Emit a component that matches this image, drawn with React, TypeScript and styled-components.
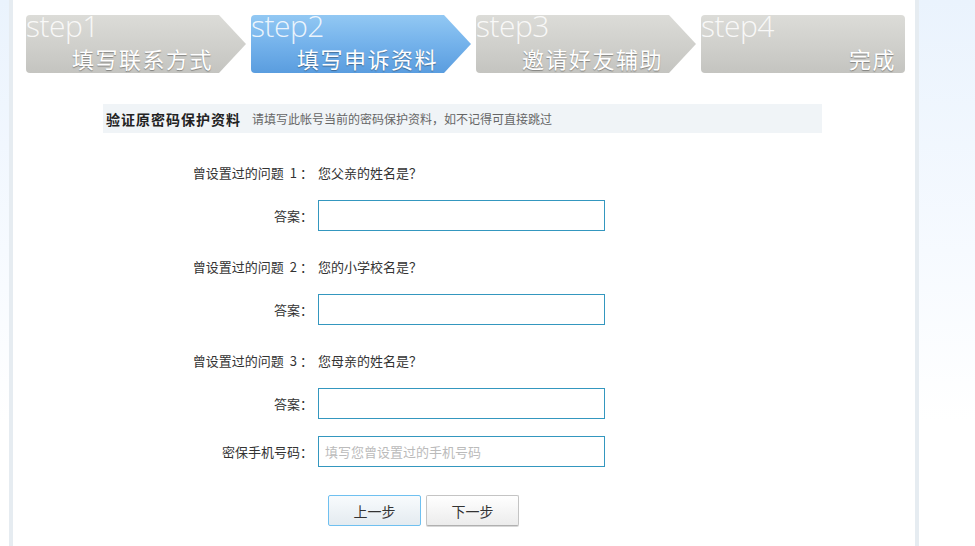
import React from 'react';
import styled, { createGlobalStyle } from 'styled-components';

const GlobalStyle = createGlobalStyle`
  html, body {
    margin: 0;
    padding: 0;
  }
  body {
    background: linear-gradient(to bottom, #eaf3fd 0, #f6faff 250px, #ffffff 420px);
    font-family: "Noto Sans CJK SC", "Liberation Sans", sans-serif;
    color: #333;
  }
`;

const Page = styled.div`
  display: flex;
  width: 975px;
  min-height: 546px;
  padding-left: 9px;
  box-sizing: border-box;
`;

const Panel = styled.div`
  width: 902px;
  background: #fff;
  border-left: 4px solid #e6ecf1;
  border-right: 4px solid #e6ecf1;
  padding-top: 15px;
  padding-bottom: 22px;
`;

const Steps = styled.div`
  display: flex;
  gap: 32px;
  margin-left: 13px;
`;

const grey = 'linear-gradient(to bottom, #dcdcd8 0%, #cfcfcb 55%, #c4c4c0 100%)';
const blue = 'linear-gradient(to bottom, #92c8f3 0%, #74b2eb 50%, #5a9ddf 100%)';

const Step = styled.div<{ $active?: boolean; $last?: boolean }>`
  position: relative;
  width: ${(p) => (p.$last ? '204px' : '193px')};
  height: 58px;
  box-sizing: border-box;
  border-radius: ${(p) => (p.$last ? '4px' : '4px 0 0 4px')};
  padding-right: ${(p) => (p.$last ? '9px' : '6px')};
  background: ${(p) => (p.$active ? blue : grey)};
  display: flex;
  flex-direction: column;

  &::after {
    content: '';
    display: ${(p) => (p.$last ? 'none' : 'block')};
    position: absolute;
    top: 0;
    left: 100%;
    width: 27px;
    height: 58px;
    background: ${(p) => (p.$active ? blue : grey)};
    clip-path: polygon(0 0, 100% 50%, 0 100%);
  }
`;

const StepNo = styled.div`
  font-family: "Open Sans", "Lato", sans-serif;
  font-weight: 300;
  font-size: 30px;
  line-height: 22px;
  height: 22px;
  color: rgba(255, 255, 255, 0.85);
  letter-spacing: -0.5px;
`;

const StepName = styled.div`
  margin-top: 9px;
  text-align: right;
  font-size: 22px;
  line-height: 24px;
  letter-spacing: 1.5px;
  color: #fff;
  text-shadow: 0 1px 1px rgba(0, 0, 0, 0.35);
`;

const SectionHead = styled.div`
  display: flex;
  align-items: center;
  gap: 11px;
  margin: 31px 0 0 90px;
  width: 719px;
  height: 29px;
  padding-left: 3px;
  box-sizing: border-box;
  background: #f0f4f7;
`;

const HeadTitle = styled.span`
  font-size: 14px;
  font-weight: bold;
  letter-spacing: 1px;
  color: #222;
`;

const HeadNote = styled.span`
  font-size: 12px;
  color: #666;
`;

const Form = styled.div`
  margin-top: 24px;
  display: flex;
  flex-direction: column;
`;

const Row = styled.div<{ $space: number }>`
  display: grid;
  grid-template-columns: 300px 1fr;
  column-gap: 5px;
  align-items: center;
  height: 31px;
  margin-bottom: ${(p) => p.$space}px;
`;

const Label = styled.div`
  text-align: right;
  font-size: 13px;
  color: #333;
`;

const Num = styled.span`
  margin: 0 3px 0 6px;
`;

const Question = styled.div`
  font-size: 13px;
  color: #333;
`;

const Input = styled.input`
  width: 287px;
  height: 31px;
  box-sizing: border-box;
  border: 1px solid #3497bf;
  padding: 0 6px;
  font-family: inherit;
  font-size: 13px;
  color: #333;
  outline: none;
  &::placeholder {
    color: #bbb;
  }
`;

const Buttons = styled.div`
  display: flex;
  gap: 5px;
  margin-left: 315px;
  margin-top: 28px;
`;

const Button = styled.button<{ $primary?: boolean }>`
  width: 93px;
  height: 31px;
  border-radius: 2px;
  font-family: inherit;
  font-size: 14px;
  color: #333;
  cursor: pointer;
  border: 1px solid ${(p) => (p.$primary ? '#6fc0f0' : '#c4c4c4')};
  border-bottom-color: ${(p) => (p.$primary ? '#6fc0f0' : '#b0b0b0')};
  background: ${(p) =>
    p.$primary
      ? 'linear-gradient(to bottom, #f8fbfd, #e4ebf0)'
      : 'linear-gradient(to bottom, #ffffff, #ececec)'};
  box-shadow: ${(p) => (p.$primary ? 'none' : '0 1px 0 #d8d8d8')};
`;

const steps = [
  { no: 'step1', name: '填写联系方式' },
  { no: 'step2', name: '填写申诉资料', active: true },
  { no: 'step3', name: '邀请好友辅助' },
  { no: 'step4', name: '完成', last: true },
];

const questions = ['您父亲的姓名是？', '您的小学校名是？', '您母亲的姓名是？'];

export default function App() {
  return (
    <>
      <GlobalStyle />
      <Page>
        <Panel>
          <Steps>
            {steps.map((s) => (
              <Step key={s.no} $active={s.active} $last={s.last}>
                <StepNo>{s.no}</StepNo>
                <StepName>{s.name}</StepName>
              </Step>
            ))}
          </Steps>

          <SectionHead>
            <HeadTitle>验证原密码保护资料</HeadTitle>
            <HeadNote>请填写此帐号当前的密码保护资料，如不记得可直接跳过</HeadNote>
          </SectionHead>

          <Form>
            {questions.map((q, i) => (
              <React.Fragment key={q}>
                <Row $space={12}>
                  <Label>
                    曾设置过的问题<Num>{i + 1}</Num>：
                  </Label>
                  <Question>{q}</Question>
                </Row>
                <Row $space={i === 2 ? 17 : 20}>
                  <Label>答案：</Label>
                  <Input type="text" />
                </Row>
              </React.Fragment>
            ))}
            <Row $space={0}>
              <Label>密保手机号码：</Label>
              <Input type="text" placeholder="填写您曾设置过的手机号码" />
            </Row>
          </Form>

          <Buttons>
            <Button $primary>上一步</Button>
            <Button>下一步</Button>
          </Buttons>
        </Panel>
      </Page>
    </>
  );
}
